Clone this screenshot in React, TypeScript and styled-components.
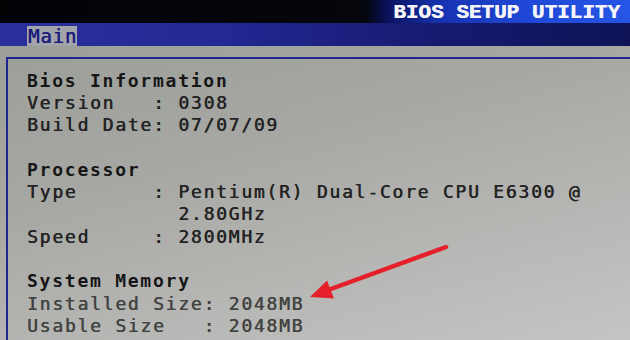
import React from "react";
import styled, { createGlobalStyle } from "styled-components";

const CELL = 12.6;

const GlobalStyle = createGlobalStyle`
  html, body {
    margin: 0;
    padding: 0;
    background: #000;
  }
  body {
    font-family: "DejaVu Sans Mono", "Liberation Mono", monospace;
  }
`;

const Screen = styled.div`
  position: relative;
  width: 630px;
  height: 340px;
  overflow: hidden;
  display: flex;
  flex-direction: column;
  background: #000;
`;

const TitleBar = styled.header`
  height: 23px;
  box-sizing: border-box;
  padding: 2px 10px 0 0;
  display: flex;
  justify-content: flex-end;
  background: linear-gradient(
    90deg,
    #030306 0%,
    #05060c 58%,
    #0b1466 62%,
    #1733b0 70%,
    #1f48d8 84%,
    #2656e6 100%
  );
`;

const Title = styled.h1`
  margin: 0;
  font-family: "Liberation Mono", "DejaVu Sans Mono", monospace;
  font-weight: 700;
  font-size: 21px;
  line-height: 21px;
  letter-spacing: 0;
  color: #f4f4f8;
  white-space: pre;
  text-shadow: 0.5px 0 0 #f4f4f8;
`;

const TabBar = styled.nav`
  height: 23px;
  box-sizing: border-box;
  padding: 3px 0 0 27px;
  display: flex;
  align-items: flex-end;
  background: linear-gradient(
    90deg,
    #2a2f9e 0%,
    #232894 35%,
    #171c74 65%,
    #0f1356 100%
  );
`;

const Tab = styled.div`
  height: 20px;
  width: 50px;
  box-sizing: border-box;
  padding-left: 1px;
  background: #a2a4aa;
  color: #1a1c7c;
  font-size: 19px;
  line-height: 20px;
  letter-spacing: 0.8px;
  white-space: pre;
  text-shadow: 0.5px 0 0 #1a1c7c;
`;

const Panel = styled.main`
  flex: 1;
  box-sizing: border-box;
  padding: 11px 0 0 6px;
  background: linear-gradient(
    165deg,
    #9c9e99 0%,
    #a7a8a4 35%,
    #b8b9b6 70%,
    #c6c6c5 100%
  );
`;

const InfoBox = styled.section`
  height: 100%;
  box-sizing: border-box;
  border-top: 2px solid #1f2690;
  border-left: 2px solid #1f2690;
  padding: 10.6px 0 0 19px;
  font-size: 18px;
  line-height: 22.3px;
  letter-spacing: 1.76px;
  color: #262626;
`;

const Group = styled.div`
  margin-bottom: 22.3px;
`;

const Heading = styled.div`
  font-weight: 700;
  color: #161616;
  white-space: pre;
`;

const Row = styled.div<{ $dim?: boolean }>`
  display: flex;
  white-space: pre;
  color: ${(p) => (p.$dim ? "#434442" : "#232323")};
  text-shadow: 0.5px 0 0 ${(p) => (p.$dim ? "#434442" : "#232323")};
`;

const Label = styled.span<{ $cols: number }>`
  width: ${(p) => p.$cols * CELL}px;
  flex: none;
`;

const Colon = styled.span`
  width: ${2 * CELL}px;
  flex: none;
`;

const Value = styled.span`
  display: flex;
  flex-direction: column;
`;

const ArrowLayer = styled.svg`
  position: absolute;
  left: 0;
  top: 0;
  width: 630px;
  height: 340px;
  pointer-events: none;
`;

type FieldProps = {
  label: string;
  cols: number;
  value: string[];
  dim?: boolean;
};

const Field = ({ label, cols, value, dim }: FieldProps) => (
  <Row $dim={dim}>
    <Label $cols={cols}>{label}</Label>
    <Colon>: </Colon>
    <Value>
      {value.map((v) => (
        <span key={v}>{v}</span>
      ))}
    </Value>
  </Row>
);

export default function App() {
  return (
    <>
      <GlobalStyle />
      <Screen>
        <TitleBar>
          <Title>BIOS SETUP UTILITY</Title>
        </TitleBar>
        <TabBar>
          <Tab>Main</Tab>
        </TabBar>
        <Panel>
          <InfoBox>
            <Group>
              <Heading>Bios Information</Heading>
              <Field label="Version" cols={10} value={["0308"]} />
              <Field label="Build Date" cols={10} value={["07/07/09"]} />
            </Group>
            <Group>
              <Heading>Processor</Heading>
              <Field
                label="Type"
                cols={10}
                value={["Pentium(R) Dual-Core CPU E6300 @", "2.80GHz"]}
              />
              <Field label="Speed" cols={10} value={["2800MHz"]} />
            </Group>
            <Group>
              <Heading>System Memory</Heading>
              <Field label="Installed Size" cols={14} value={["2048MB"]} dim />
              <Field label="Usable Size" cols={14} value={["2048MB"]} dim />
            </Group>
          </InfoBox>
        </Panel>
        <ArrowLayer viewBox="0 0 630 340">
          <line
            x1="446"
            y1="247"
            x2="324"
            y2="291.5"
            stroke="#e5202a"
            strokeWidth="4.5"
            strokeLinecap="round"
          />
          <polygon points="310,297 327,280.5 334,298.5" fill="#e5202a" />
        </ArrowLayer>
      </Screen>
    </>
  );
}
